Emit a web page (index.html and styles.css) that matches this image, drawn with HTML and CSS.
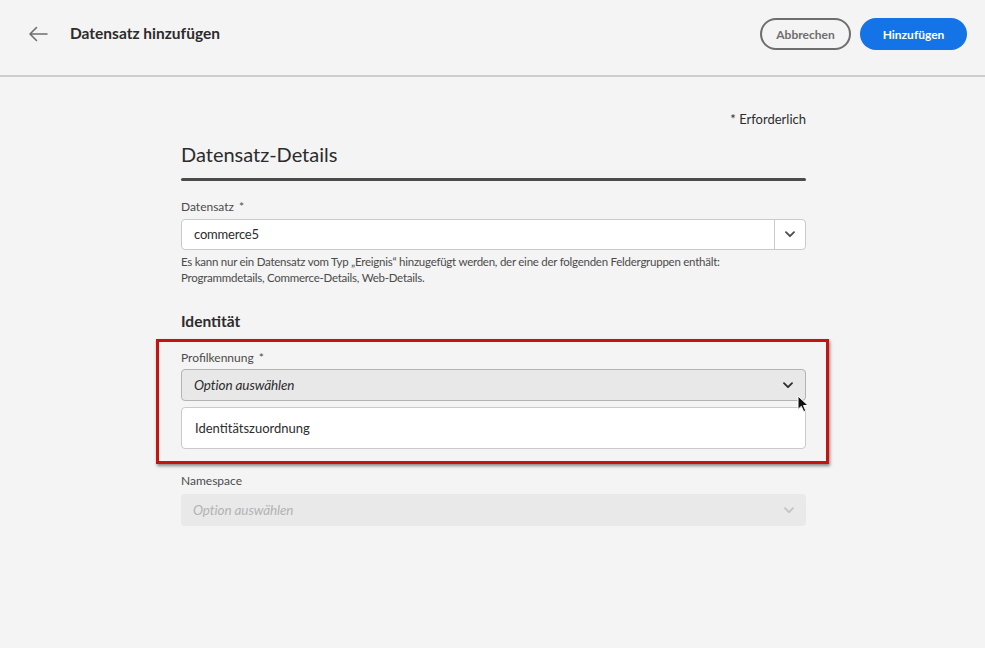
FILE: index.html
```html
<!DOCTYPE html>
<html lang="de">
<head>
<meta charset="utf-8">
<title>Datensatz hinzufügen</title>
<link rel="stylesheet" href="styles.css">
</head>
<body>
<header class="topbar">
  <button class="back" aria-label="Zurück">
    <svg width="20" height="16" viewBox="0 0 20 16"><path d="M19 8H2M8.5 1.5L2 8l6.5 6.5" fill="none" stroke="#6e6e6e" stroke-width="1.6" stroke-linecap="round" stroke-linejoin="round"/></svg>
  </button>
  <h1 class="title">Datensatz hinzufügen</h1>
  <div class="actions">
    <button class="btn btn-secondary">Abbrechen</button>
    <button class="btn btn-primary">Hinzufügen</button>
  </div>
</header>
<main class="content">
  <div class="required-note">* Erforderlich</div>
  <h2 class="section-title">Datensatz-Details</h2>
  <div class="section-bar"></div>

  <div class="field-label first-label">Datensatz <span class="star">*</span></div>
  <div class="combo">
    <div class="combo-input">commerce5</div>
    <div class="combo-btn">
      <svg width="10" height="7" viewBox="0 0 10 7"><path d="M1 1.2l4 4 4-4" fill="none" stroke="#4b4b4b" stroke-width="1.8" stroke-linecap="round" stroke-linejoin="round"/></svg>
    </div>
  </div>
  <p class="help">Es kann nur ein Datensatz vom Typ „Ereignis“ hinzugefügt werden, der eine der folgenden Feldergruppen enthält:<br>Programmdetails, Commerce-Details, Web-Details.</p>

  <h3 class="subhead">Identität</h3>

  <div class="highlight">
    <div class="field-label">Profilkennung <span class="star">*</span></div>
    <div class="picker picker-hover">
      <span class="placeholder">Option auswählen</span>
      <svg width="10" height="7" viewBox="0 0 10 7"><path d="M1 1.2l4 4 4-4" fill="none" stroke="#2c2c2c" stroke-width="1.8" stroke-linecap="round" stroke-linejoin="round"/></svg>
    </div>
    <div class="menu">
      <div class="menu-item">Identitätszuordnung</div>
    </div>
    <svg class="cursor" width="12" height="18" viewBox="0 0 12 18"><path d="M1 1v13.5l3.3-3.2 2.4 5.4 2.1-.9-2.3-5.3h4.6z" fill="#111" stroke="#fff" stroke-width="1"/></svg>
  </div>

  <div class="field-label ns-label">Namespace</div>
  <div class="picker picker-disabled">
    <span class="placeholder">Option auswählen</span>
    <svg width="10" height="7" viewBox="0 0 10 7"><path d="M1 1.2l4 4 4-4" fill="none" stroke="#c4c4c4" stroke-width="1.8" stroke-linecap="round" stroke-linejoin="round"/></svg>
  </div>
</main>
</body>
</html>
```
FILE: styles.css
```css
* { box-sizing: border-box; }
html, body { margin: 0; padding: 0; }
body {
  background: #f4f4f4;
  font-family: Lato, "Noto Sans", sans-serif;
  color: #2c2c2c;
  width: 985px;
  height: 648px;
  overflow: hidden;
}
.topbar {
  height: 77px;
  display: flex;
  align-items: flex-start;
  padding: 18px 18px 0 28px;
  border-bottom: 2px solid #cdcdcd;
}
.back {
  background: none;
  border: 0;
  padding: 0;
  width: 20px;
  height: 16px;
  display: flex;
  margin-top: 8px;
}
.title {
  margin: 0 0 0 22px;
  font-size: 15.5px;
  line-height: 31px;
  font-weight: 700;
  color: #2c2c2c;
}
.actions {
  margin-left: auto;
  display: flex;
  gap: 9px;
}
.btn {
  height: 32px;
  border-radius: 16px;
  font-family: Lato, sans-serif;
  font-weight: 700;
  font-size: 12px;
  padding: 0;
  cursor: pointer;
}
.btn-secondary {
  width: 91px;
  background: transparent;
  border: 2px solid #6e6e6e;
  color: #6e6e6e;
}
.btn-primary {
  width: 107px;
  background: #1473e6;
  border: 0;
  color: #fff;
}
.content {
  width: 625px;
  margin: 0 auto;
  padding-top: 34px;
  position: relative;
  left: 1px;
}
.required-note {
  text-align: right;
  font-size: 13px;
  line-height: 16px;
  color: #2c2c2c;
}
.section-title {
  margin: 14px 0 0;
  font-size: 20px;
  line-height: 26px;
  font-weight: 400;
  color: #2c2c2c;
}
.section-bar {
  margin-top: 11px;
  height: 3px;
  border-radius: 2px;
  background: #4b4b4b;
}
.field-label {
  font-size: 12px;
  line-height: 16px;
  color: #4b4b4b;
}
.first-label { margin-top: 18px; }
.star { font-size: 12px; margin-left: 2px; }
.combo {
  margin-top: 4px;
  height: 31px;
  display: flex;
  background: #fff;
  border: 1px solid #cacaca;
  border-radius: 4px;
}
.combo-input {
  flex: 1;
  padding-left: 12px;
  font-size: 13px;
  letter-spacing: -0.2px;
  line-height: 29px;
  color: #2c2c2c;
}
.combo-btn {
  width: 31px;
  border-left: 1px solid #cacaca;
  display: flex;
  align-items: center;
  justify-content: center;
}
.help {
  margin: 4px 0 0;
  font-size: 11.5px;
  letter-spacing: -0.25px;
  line-height: 16px;
  color: #4b4b4b;
}
.subhead {
  margin: 25px 0 0;
  font-size: 15.5px;
  line-height: 20px;
  font-weight: 700;
  color: #2c2c2c;
}
.highlight {
  position: relative;
  margin: 8px -23px 0 -25px;
  border: 3px solid #c5130f;
  padding: 8px 20px 12px 22px;
  box-shadow: 1px 2px 3px rgba(0, 0, 0, 0.45);
}
.picker {
  margin-top: 3px;
  height: 32px;
  display: flex;
  align-items: center;
  justify-content: space-between;
  padding: 0 12px 0 12px;
  border-radius: 4px;
  font-size: 13.5px;
  letter-spacing: -0.1px;
}
.placeholder { font-style: italic; }
.picker-hover {
  background: #e8e8e8;
  border: 1px solid #b3b3b3;
  color: #2c2c2c;
}
.menu {
  margin-top: 6px;
  height: 42px;
  background: #fff;
  border: 1px solid #cacaca;
  border-radius: 4px;
  display: flex;
  align-items: center;
}
.menu-item {
  padding-left: 13px;
  font-size: 13px;
  color: #2c2c2c;
}
.cursor {
  position: absolute;
  left: 638px;
  top: 53px;
}
.ns-label { margin-top: 9px; }
.picker-disabled {
  margin-top: 5px;
  background: #e9e9e9;
  border: 0;
  color: #b3b3b3;
}
```
